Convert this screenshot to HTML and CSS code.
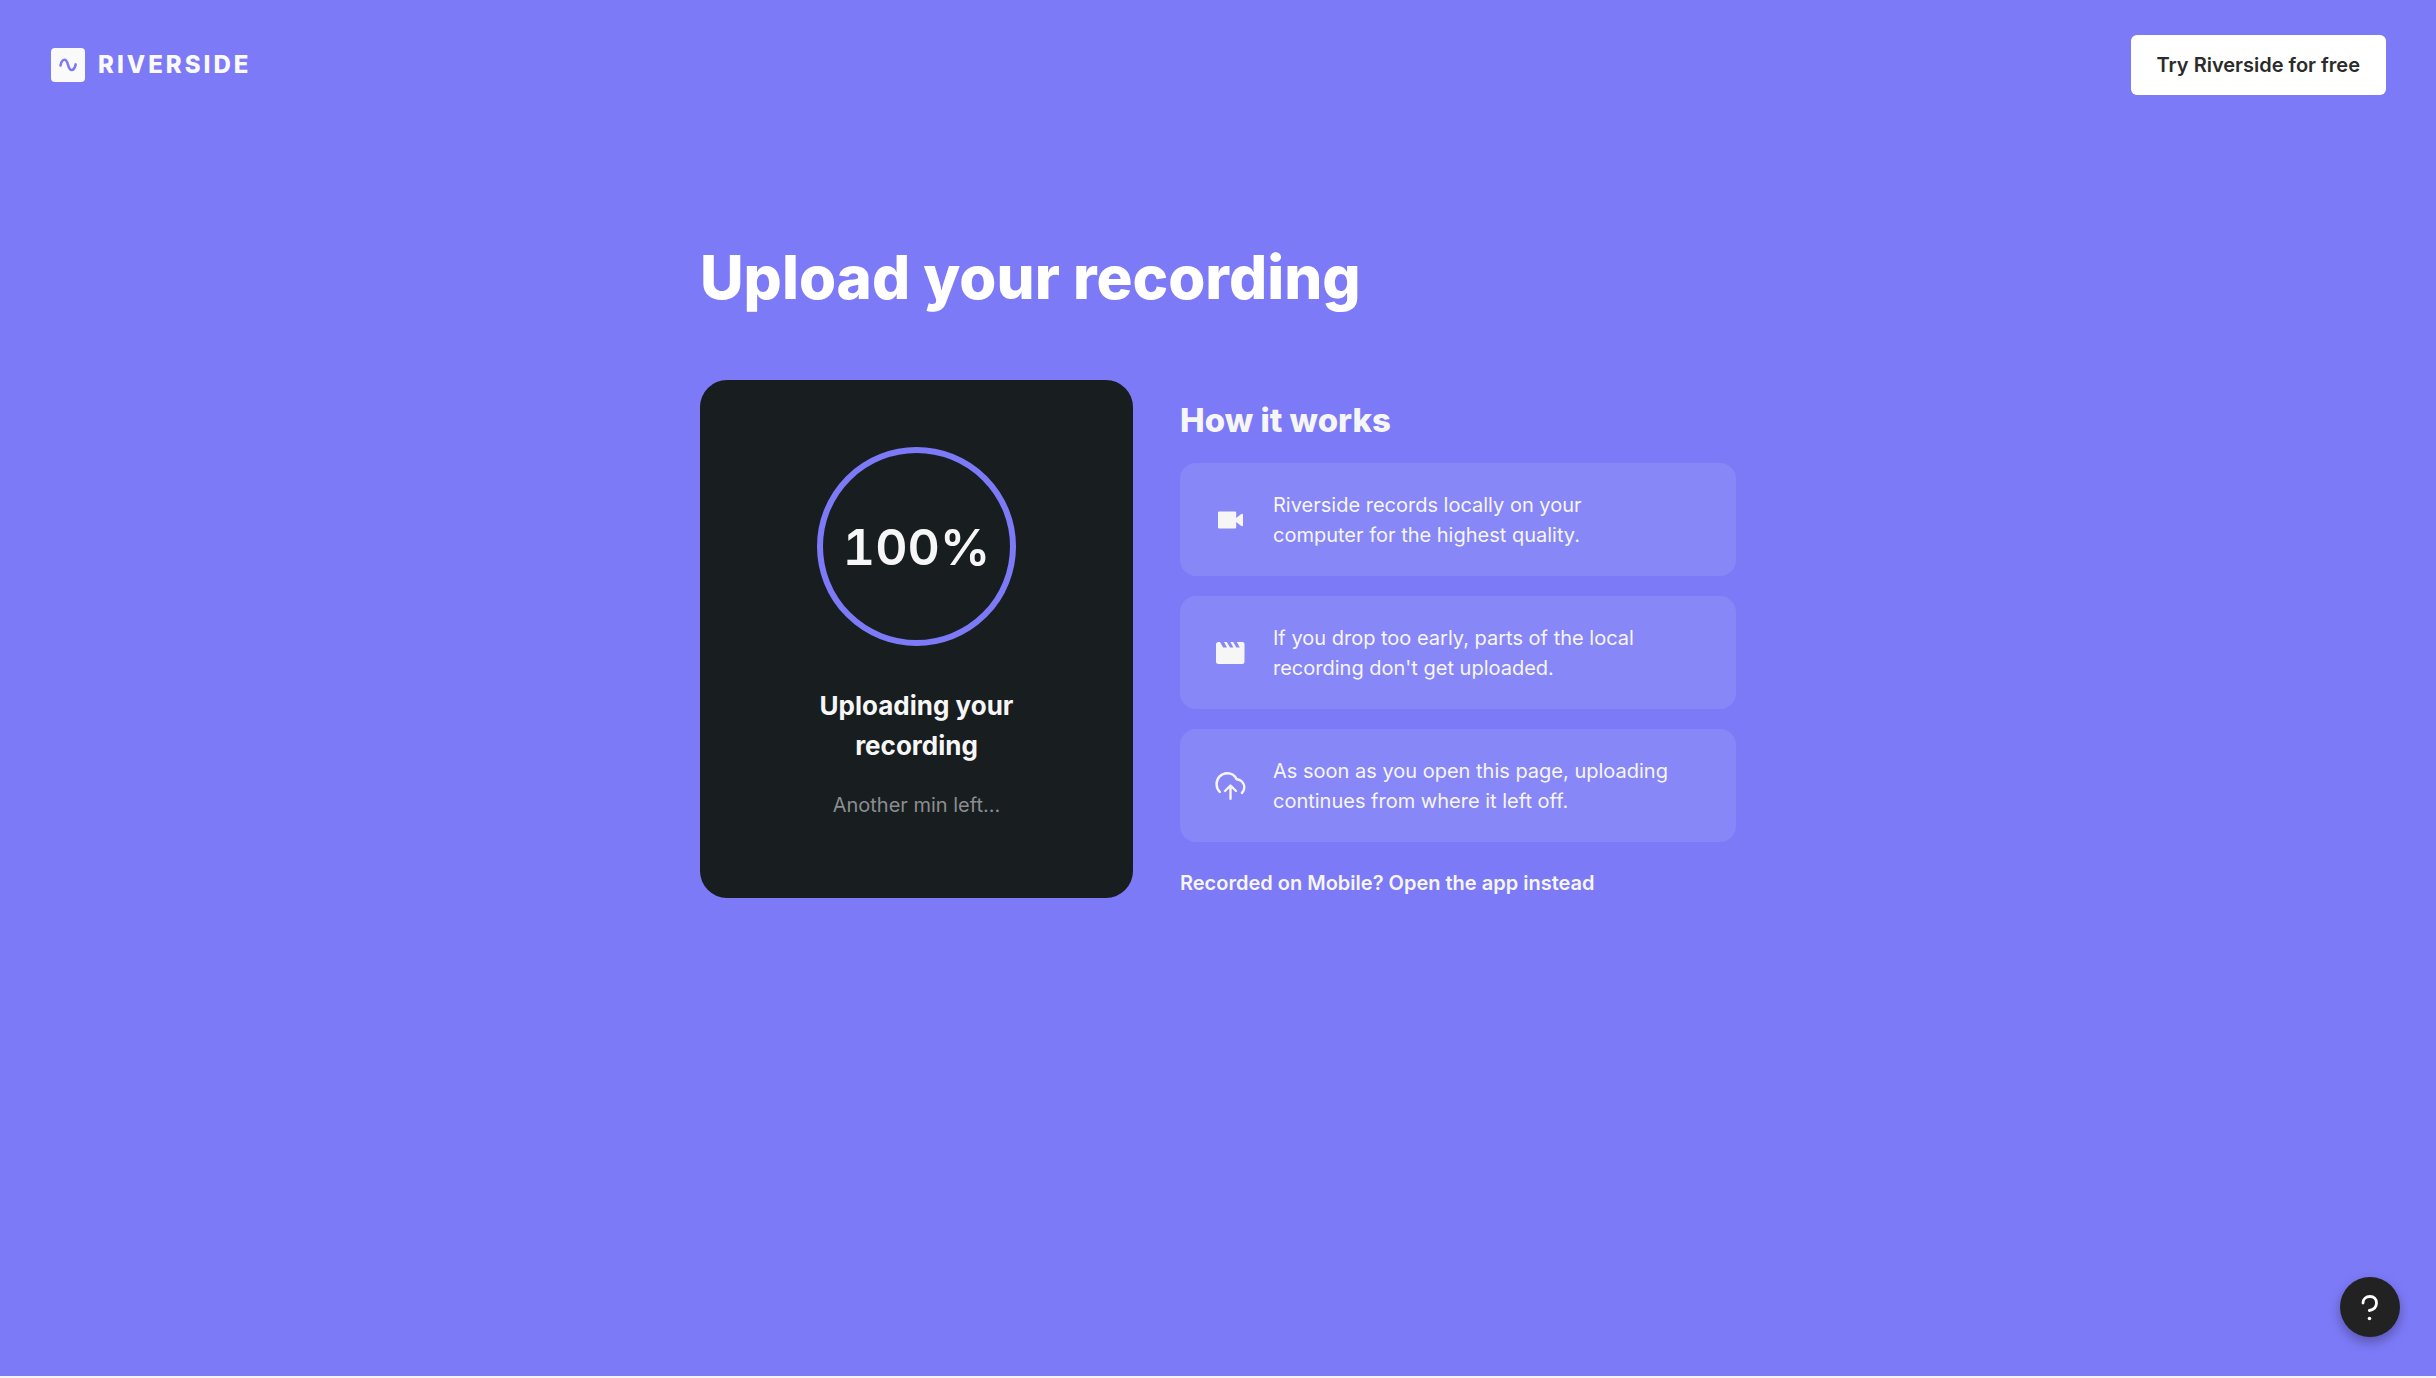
FILE: index.html
```html
<!DOCTYPE html>
<html lang="en">
<head>
<meta charset="utf-8">
<meta name="viewport" content="width=device-width, initial-scale=1">
<title>Upload your recording</title>
<link rel="stylesheet" href="styles.css">
</head>
<body>
<div class="page">
  <header class="header">
    <a class="logo" href="#">
      <svg class="logo-mark" viewBox="0 0 34 34" aria-hidden="true"><rect width="34" height="34" rx="4" fill="#fafafa"/><path d="M9.500 17.500C10.200 14 11.600 11.800 13.600 11.800C17.600 11.800 16.400 22 20.600 22C22.800 22 24 19.500 24.700 16.400" fill="none" stroke="#7d7af8" stroke-width="2.600" stroke-linecap="round"/></svg>
      <span class="logo-name">RIVERSIDE</span>
    </a>
    <button class="cta" type="button">Try Riverside for free</button>
  </header>
  <main class="main">
    <h1 class="title">Upload your recording</h1>
    <div class="columns">
      <section class="status">
        <div class="ring">100%</div>
        <h2 class="status-title">Uploading your recording</h2>
        <p class="status-note">Another min left...</p>
      </section>
      <section class="info">
        <h2 class="info-title">How it works</h2>
        <ul class="steps">
          <li class="step">
            <svg class="icon" viewBox="1 0 32 32" aria-hidden="true"><path fill="#f6f6f6" d="M6.200 7.500H22Q23.200 7.500 23.200 8.700V14L27.600 10.400Q30 8.900 30 11V21Q30 23.100 27.600 21.600L23.200 18V23.300Q23.200 24.500 22 24.500H6.200Q5 24.500 5 23.300V8.700Q5 7.500 6.200 7.500Z"/></svg>
            <p>Riverside records locally on your<br>computer for the highest quality.</p>
          </li>
          <li class="step">
            <svg class="icon" viewBox="0 0 32 32" aria-hidden="true"><path fill="#f6f6f6" d="M6 5L9.200 10.500H13L10 5H12.800L16 10.500H19.400L16.400 5H19.200L22.400 10.500H25.800L22.800 5H28.500Q30.500 5 30.500 7V24.500Q30.500 27 28 27H4.500Q2 27 2 24.500V7.500Q2 5 4.500 5Z"/></svg>
            <p>If you drop too early, parts of the local<br>recording don't get uploaded.</p>
          </li>
          <li class="step">
            <svg class="icon" viewBox="0 1 32 32" fill="none" stroke="#f6f6f6" stroke-width="2.400" stroke-linecap="round" stroke-linejoin="round" aria-hidden="true"><path d="M5.800 23C3.600 20.800 2.600 18 2.600 15C2.600 9 7.200 4.200 13.200 4.200C17.400 4.200 21 6.500 22.600 10.200C27.100 10.500 30.300 14 30.300 18.300C30.300 20.600 29.400 22.600 27.900 24"/><path d="M16.500 29.800V17M11 22L16.500 16.500L22 22"/></svg>
            <p>As soon as you open this page, uploading<br>continues from where it left off.</p>
          </li>
        </ul>
        <a class="mobile-link" href="#">Recorded on Mobile? Open the app instead</a>
      </section>
    </div>
  </main>
  <button class="help" type="button" aria-label="Help"><svg viewBox="0 0 60 60" aria-hidden="true"><path d="M23 26C23 22 26 19.500 30 19.500C34 19.500 36.500 22 36.500 26C36.500 30.500 33.500 32.700 29.300 33.500" fill="none" stroke="#fff" stroke-width="2.800" stroke-linecap="round" stroke-linejoin="round"/><circle cx="29.500" cy="41.500" r="1.800" fill="#fff"/></svg></button>
</div>
</body>
</html>
```
FILE: styles.css
```css
* {
  box-sizing: border-box;
}

body {
  margin: 0;
  padding-bottom: 2px;
  background: #f6f6f6;
  color: #f6f6f6;
  font-family: Inter, "Liberation Sans", sans-serif;
  font-size: 20px;
  line-height: 30px;
}

h1,
h2,
p,
ul {
  margin: 0;
  padding: 0;
}

.page {
  min-height: calc(100vh - 2px);
  background: #7d7af8;
}

.header {
  display: flex;
  justify-content: space-between;
  align-items: center;
  padding: 35px 50px 0 51px;
}

.logo {
  display: flex;
  align-items: center;
  gap: 13px;
  color: #fafafa;
  text-decoration: none;
}

.logo-mark {
  width: 34px;
  height: 34px;
}

.logo-name {
  font-size: 24px;
  font-weight: 800;
  letter-spacing: 3px;
}

.cta {
  height: 60px;
  padding: 0 26px;
  border: 0;
  border-radius: 6px;
  background: #fff;
  color: #2b2b2b;
  font: inherit;
  font-weight: 600;
}

.main {
  max-width: 1036px;
  margin: 0 auto;
  padding-top: 144px;
}

.title {
  color: #fff;
  font-size: 60px;
  line-height: 76px;
  font-weight: 800;
}

.columns {
  display: grid;
  grid-template-columns: 433fr 556fr;
  gap: 47px;
  margin-top: 65px;
}

.status {
  display: flex;
  flex-direction: column;
  align-items: center;
  padding: 67px 80px;
  border-radius: 27px;
  background: #181d20;
  text-align: center;
}

.ring {
  display: grid;
  place-items: center;
  width: 199px;
  height: 199px;
  border: 6px solid #7d7af8;
  border-radius: 50%;
  font-size: 50px;
  font-weight: 600;
  font-variant-numeric: tabular-nums;
}

.status-title {
  max-width: 240px;
  margin-top: 40px;
  font-size: 26px;
  line-height: 40px;
  font-weight: 700;
}

.status-note {
  margin-top: 24px;
  color: #8b8d8f;
}

.info-title {
  padding-top: 20px;
  font-size: 33px;
  line-height: 40px;
  font-weight: 800;
}

.steps {
  display: grid;
  gap: 20px;
  margin-top: 23px;
  list-style: none;
}

.step {
  display: flex;
  align-items: center;
  gap: 27px;
  min-height: 113px;
  padding: 0 34px;
  border-radius: 16px;
  background: #8887f8;
}

.icon {
  flex: none;
  width: 32px;
  height: 32px;
}

.mobile-link {
  display: block;
  margin-top: 26px;
  color: #f6f6f6;
  font-weight: 600;
  text-decoration: none;
}

.help {
  position: fixed;
  right: 36px;
  bottom: 41px;
  width: 60px;
  height: 60px;
  padding: 0;
  border: 0;
  border-radius: 50%;
  background: #222;
  box-shadow: 0 5px 12px rgba(0, 0, 0, 0.3);
}

.help svg {
  display: block;
}
```
